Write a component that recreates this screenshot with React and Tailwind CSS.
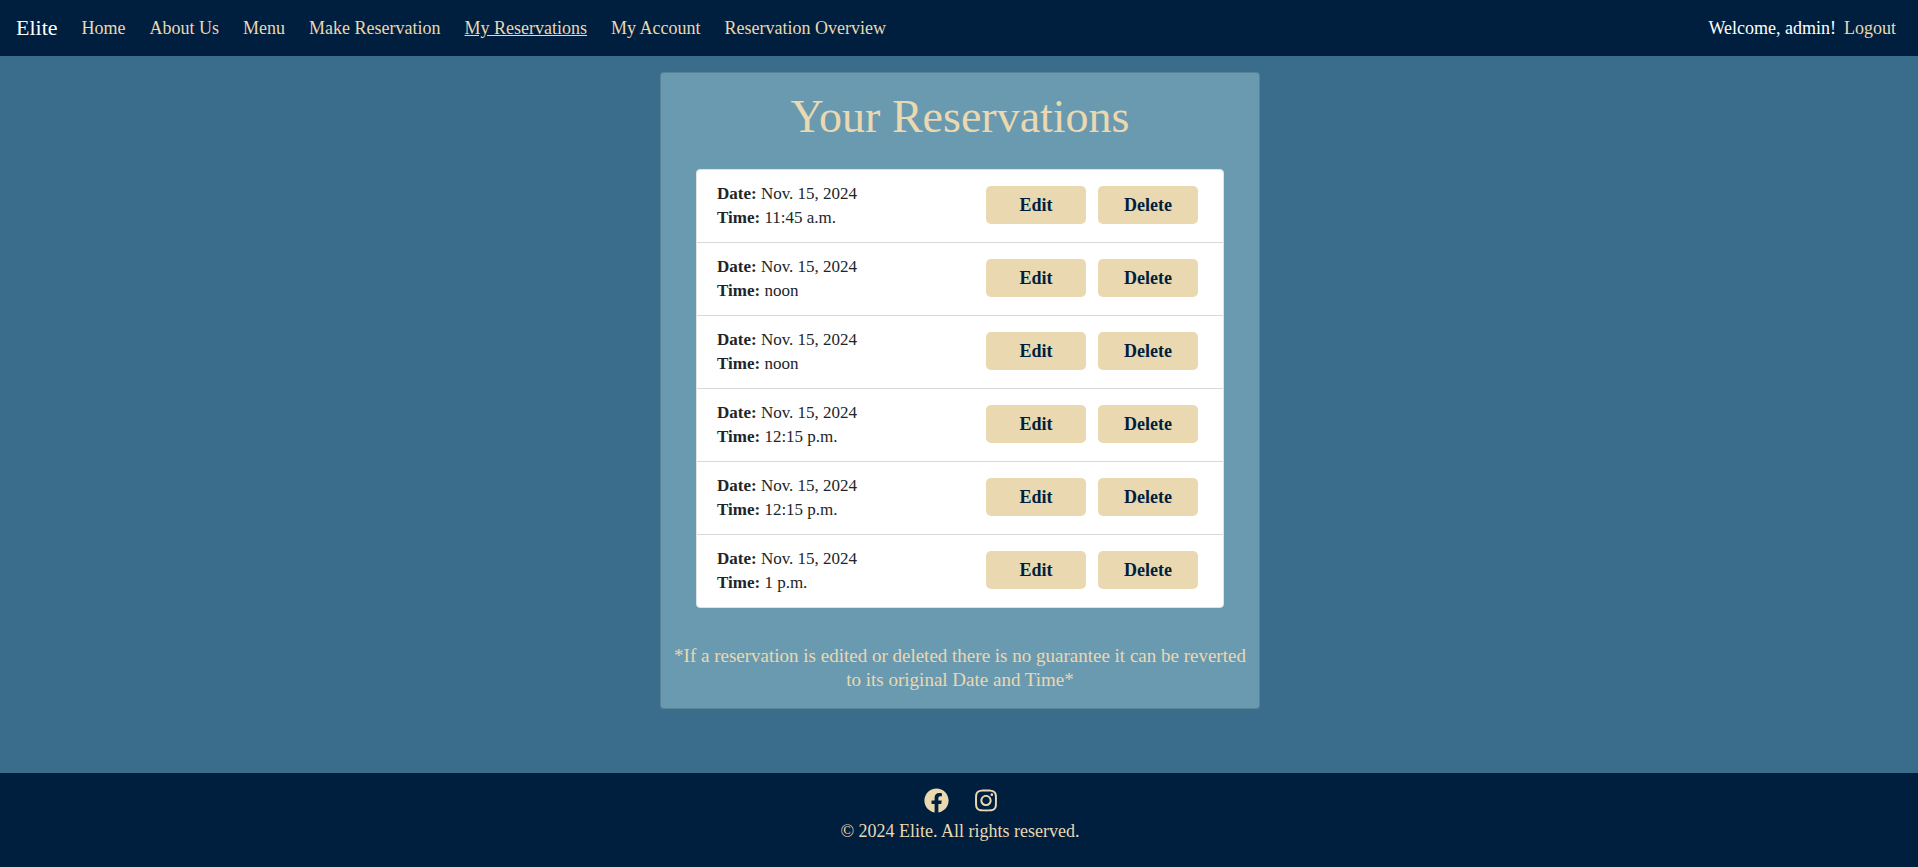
import { FaFacebook, FaInstagram } from "react-icons/fa";

const links = [
  "Home",
  "About Us",
  "Menu",
  "Make Reservation",
  "My Reservations",
  "My Account",
  "Reservation Overview",
];

const reservations = [
  { id: 1, date: "Nov. 15, 2024", time: "11:45 a.m." },
  { id: 2, date: "Nov. 15, 2024", time: "noon" },
  { id: 3, date: "Nov. 15, 2024", time: "noon" },
  { id: 4, date: "Nov. 15, 2024", time: "12:15 p.m." },
  { id: 5, date: "Nov. 15, 2024", time: "12:15 p.m." },
  { id: 6, date: "Nov. 15, 2024", time: "1 p.m." },
];

function Header() {
  return (
    <header className="flex h-14 items-center justify-between bg-[#001f3f] pr-[22px] pl-4 text-[#ead8b1]">
      <nav aria-label="Main" className="flex items-center gap-6">
        <a href="#" className="text-[22px] text-white">
          Elite
        </a>
        {links.map((label) => (
          <a
            key={label}
            href="#"
            aria-current={label === "My Reservations" ? "page" : undefined}
            className="aria-[current=page]:underline"
          >
            {label}
          </a>
        ))}
      </nav>
      <div className="flex items-center gap-2">
        <span className="text-white">Welcome, admin!</span>
        <a href="#">Logout</a>
      </div>
    </header>
  );
}

function ActionButton({ children }) {
  return (
    <button
      type="button"
      className="h-[38px] w-[100px] rounded-[5px] bg-[#ead8b1] text-[18px] font-bold text-[#001f3f]"
    >
      {children}
    </button>
  );
}

function ReservationRow({ date, time }) {
  return (
    <li className="flex items-start justify-between py-3 pr-[25px] pl-5">
      <div>
        <p>
          <strong>Date:</strong> {date}
        </p>
        <p>
          <strong>Time:</strong> {time}
        </p>
      </div>
      <div className="flex gap-3 pt-1">
        <ActionButton>Edit</ActionButton>
        <ActionButton>Delete</ActionButton>
      </div>
    </li>
  );
}

function Footer() {
  return (
    <footer className="flex flex-col items-center bg-[#001f3f] pt-[15px] pb-6 pl-0.5 text-[#ead8b1]">
      <div className="flex items-center gap-[26px]">
        <a href="#" aria-label="Facebook">
          <FaFacebook className="h-[25px] w-[25px]" />
        </a>
        <a href="#" aria-label="Instagram">
          <FaInstagram className="h-[25px] w-[22px]" />
        </a>
      </div>
      <p className="pt-1.5">© 2024 Elite. All rights reserved.</p>
    </footer>
  );
}

export default function App() {
  return (
    <div className="flex min-h-screen flex-col bg-[#3a6d8c] font-['Liberation_Serif',serif] text-[18px] leading-6">
      <Header />
      <main className="flex grow flex-col items-center py-4 pl-0.5">
        <section className="w-full max-w-[600px] rounded-[4px] border border-black/15 bg-[#6a9ab0] px-3 pt-5 pb-4 text-[#ead8b1]">
          <h1 className="text-center text-[46px] leading-12">Your Reservations</h1>
          <ul className="mx-[23px] mt-7 divide-y divide-[#d8d8d8] rounded-[4px] border border-[#dee2e6] bg-white text-[17px] text-[#212529]">
            {reservations.map((r) => (
              <ReservationRow key={r.id} date={r.date} time={r.time} />
            ))}
          </ul>
          <p className="mt-9 text-center text-[19px]">
            *If a reservation is edited or deleted there is no guarantee it can be reverted to its
            original Date and Time*
          </p>
        </section>
      </main>
      <Footer />
    </div>
  );
}
